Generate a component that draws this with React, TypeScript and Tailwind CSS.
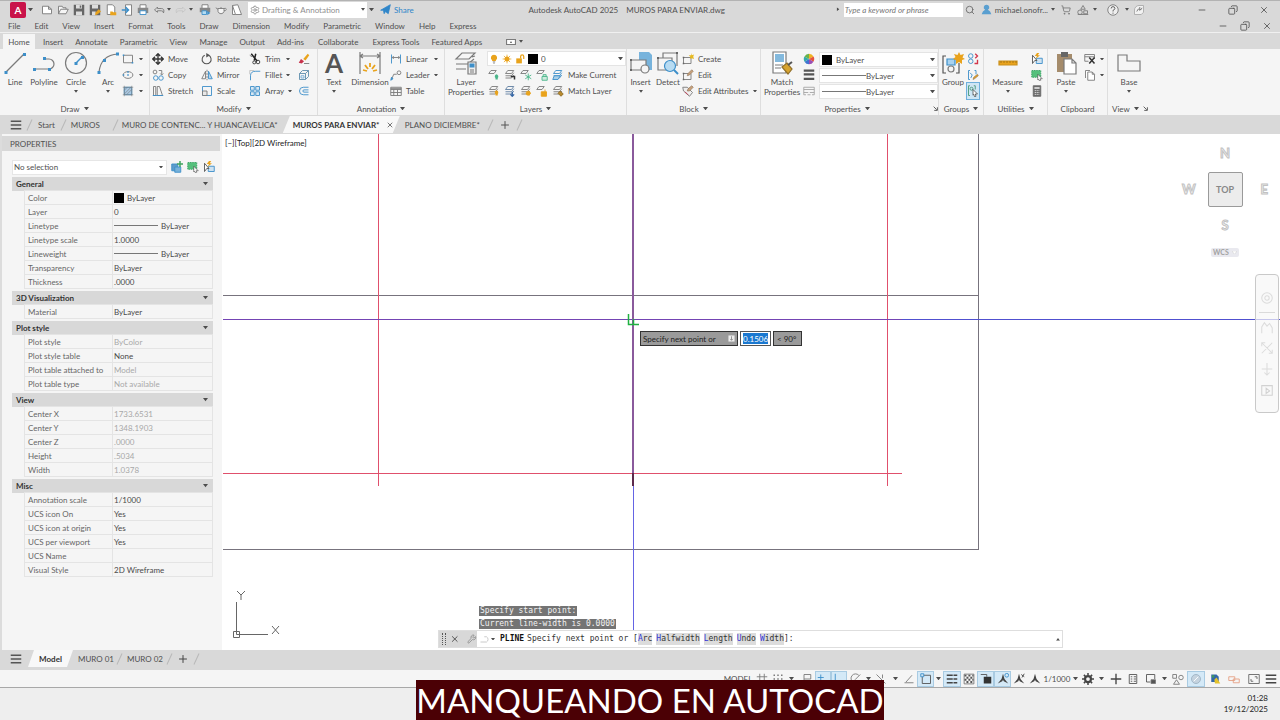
import type { ReactNode } from "react";
import { Search, ShoppingCart, Settings, X, Minus, Copy, Plus, Wrench } from "lucide-react";

type IconProps = { children: ReactNode; className?: string; box?: string };

const Ico = ({ children, className = "size-3", box = "0 0 16 16" }: IconProps) => (
  <svg viewBox={box} fill="none" stroke="#7b7b7b" strokeWidth="1.2" className={`${className} shrink-0`} aria-hidden="true">
    {children}
  </svg>
);

const Caret = ({ className = "w-[5px]" }: { className?: string }) => (
  <svg viewBox="0 0 6 4" className={`${className} shrink-0`} aria-hidden="true">
    <path d="M0 0h6L3 4z" fill="#4d4d4d" />
  </svg>
);

const blue = "#3d8fc9";
const gold = "#e9a31c";
const green = "#4bb58a";

const Sheets = ({ color = "#7b7b7b" }: { color?: string }) => (
  <path d="M5 2h8l-3 4H2zM2 9h8l3-4M2 12h8l3-4" stroke={color} />
);

const icons = {
  fresh: <path d="M2 3h8l4 4v6H2zM10 3v4h4" fill="#fff" />,
  open: <path d="M2 13V3h5l1 2h4v2M2 13l3-6h10l-3 6z" fill="#f5f5f5" />,
  save: <><path d="M1 1h14v14H1z" fill="#666" stroke="none" /><path d="M4 1h8v5H4zM4 10h8v5H4z" fill="#ddd" stroke="none" /><path d="M9 2h2v3H9z" fill="#666" stroke="none" /></>,
  saveAs: <><path d="M1 1h14v14H1z" fill="#666" stroke="none" /><path d="M4 1h8v5H4zM4 10h5v5H4z" fill="#ddd" stroke="none" /><path d="M8 15l1-4 4-4 3 3-5 4z" fill={gold} stroke="none" /></>,
  webOpen: <><path d="M3 1h7l3 3v10H3z" fill="#fff" /><path d="M7 14v-4h3l1 1h4v4H7z" fill={gold} stroke="none" /></>,
  mobile: <><path d="M6 1h8v14H6z" fill="#fff" /><path d="M1 8h8M6 4l4 4-4 4" stroke={blue} strokeWidth="2" /></>,
  plot: <><path d="M4 1h8v5H4z" fill="#fff" /><path d="M1 5h14v7H1z" fill="#888" stroke="none" /><path d="M4 9h8v5H4z" fill="#fff" stroke={blue} /></>,
  batch: <><path d="M4 1h8v5H4z" fill="#fff" /><path d="M1 5h14v6H1z" fill="#888" stroke="none" /><path d="M4 9h6v5H4z" fill="#b4dcf2" stroke={blue} /><path d="M11 9l4 3-4 3z" fill={blue} stroke="none" /></>,
  undo: <path d="M6 4L2 8l4 3V9h5q3 0 3 3 2-6-3-6H6z" />,
  redo: <path d="M10 4l4 4-4 3V9H5q-3 0-3 3-2-6 3-6h5z" stroke="#c6c6c6" />,
  teapot: <path d="M4 6h8v4q-1 3-4 3t-4-3zM4 7L1 5M12 6q3-1 3 1t-3 2M8 4v2" fill="#f5f5f5" />,
  sheet: <path d="M2 2l7-1 5 13H6zM2 2v12h4" fill="#fff" />,
  rect: <><path d="M2 3h12v10H2z" /><path d="M1 2h2v2H1zM13 12h2v2h-2z" fill={blue} stroke="none" /></>,
  ellipse: <><ellipse cx="8" cy="8" rx="6.500" ry="4.500" /><path d="M7 7h2v2H7zM1 7h2v2H1zM7 3h2v2H7z" fill={blue} stroke="none" /></>,
  hatch: <><path d="M3 3h10v10H3z" fill="#a9c9e4" stroke={blue} /><path d="M1 3h14M1 13h14M3 1v14M13 1v14M3 7l4-4M3 12l9-9M6 13l7-7" strokeWidth=".8" /></>,
  move: <path d="M8 1v14M1 8h14M5 4l3-3 3 3M5 12l3 3 3-3M4 5L1 8l3 3M12 5l3 3-3 3" stroke="#333" strokeWidth="1.8" />,
  copy: <><circle cx="4" cy="4" r="2.500" /><circle cx="5" cy="12" r="3" stroke={blue} /><circle cx="12" cy="12" r="3" stroke={blue} /><path d="M9 2h4v5M11 6l2 2 2-2" /></>,
  stretch: <><path d="M2 14V2h3v12zM7 2h3l4 12H7z" /><path d="M1 14h14" stroke={blue} /></>,
  rotate: <><path d="M10 3a6 6 0 1 1-5 0" stroke="#555" strokeWidth="1.4" /><path d="M7 0v6l5-3z" fill="#555" stroke="none" /></>,
  mirror: <><path d="M6 3v10H1z" /><path d="M10 3v10h5z" fill="#b9d4ea" stroke={blue} /><path d="M8 1v14" strokeDasharray="3 1" /></>,
  scale: <><path d="M2 2h12v12H2z" stroke={blue} /><path d="M2 8h6v6H2z" fill="#e8e8e8" /></>,
  trim: <><path d="M3 1l8 10M9 1L7 10" stroke="#222" strokeWidth="2" /><circle cx="12" cy="12" r="2.400" stroke="#333" /><circle cx="7" cy="12.500" r="2" stroke="#333" /><path d="M1 3l3 2" /></>,
  fillet: <><path d="M2 15V9q0-6 7-6h6" stroke={blue} /><path d="M1 7V2h6" stroke="#aaa" strokeWidth=".8" /></>,
  array: <path d="M2 2h5v5H2zM9 2h5v5H9zM2 9h5v5H2zM9 9h5v5H9z" fill="#d7e7f3" stroke={blue} />,
  erase: <><path d="M13 1l2 2-5 7-3-2z" fill={gold} stroke="none" /><path d="M4 8l4 3-3 3-4-1z" fill="#c8324b" stroke="none" /><path d="M8 14h7" /></>,
  explode: <><path d="M2 6h8v8H2zM2 6l4-4h8l-4 4M14 2v8l-4 4" stroke="#5e8dad" /><path d="M4 9h4v3H4z" stroke={blue} strokeWidth=".8" /></>,
  offset: <path d="M14 3H7a5 5 0 0 0 0 10h7M14 6.500H8a1.500 1.500 0 0 0 0 3h6" stroke={blue} />,
  linear: <><path d="M2 2v12M14 2v12" stroke={blue} /><path d="M3 6h10M5 4L3 6l2 2M11 4l2 2-2 2" /></>,
  leader: <><path d="M2 14l3-7h4" /><circle cx="12" cy="5" r="2.500" /><path d="M1 15l1-4 2 2z" fill={blue} stroke={blue} /></>,
  table: <path d="M1 3h14v11H1zM1 6h14M1 10h14M5 6v8M10 6v8M1 4.500h14" />,
  palette: <><path d="M8 8V1a7 7 0 0 1 6 3.500z" fill="#f0b323" stroke="none" /><path d="M8 8l6-3.500a7 7 0 0 1 0 7z" fill="#e5533d" stroke="none" /><path d="M8 8l6 3.500A7 7 0 0 1 8 15z" fill="#9b4fb3" stroke="none" /><path d="M8 8v7a7 7 0 0 1-6-3.500z" fill="#3f74d1" stroke="none" /><path d="M8 8l-6 3.500a7 7 0 0 1 0-7z" fill="#36a9a9" stroke="none" /><path d="M8 8L2 4.500A7 7 0 0 1 8 1z" fill="#69b34b" stroke="none" /></>,
  weights: <path d="M1 2h14M1 7h14M1 13h14" stroke="#555" strokeWidth="3" />,
  types: <path d="M1 3h14M1 6h14M1 10h6M9 10h6M1 13h3M6 13h4M12 13h3M1 3v10M15 3v10" stroke="#a5a5a5" />,
  create: <><path d="M2 6h10v8H2z" /><path d="M1 5h2v2H1zM1 13h2v2H1z" fill="#666" stroke="none" /><path d="M12 0l1 3 3-1-1 3 1 3-3-1-2 1V5L9 3l3 0z" fill="#e6b91f" stroke="none" /></>,
  edit: <><path d="M2 6h10v8H2z" /><path d="M1 5h2v2H1zM1 13h2v2H1z" fill="#666" stroke="none" /><path d="M7 9l1-3 5-5 2 2-5 5z" fill="#c9a27b" stroke="#8a6f55" strokeWidth=".8" /></>,
  attrs: <><path d="M1 3h6l7 7-4 5-8-7z" fill="#eee" /><path d="M7 8l1-3 5-4 2 2-5 5z" fill="#c9a27b" stroke="#8a6f55" strokeWidth=".8" /><path d="M4 9l4 4" stroke="#c8324b" /></>,
  ungroup: <><circle cx="5" cy="4" r="3" stroke={blue} /><circle cx="5" cy="11" r="3" stroke={blue} /><path d="M11 1l3 3-3 3M10 14h4V9" stroke="#d2354a" strokeWidth="1.8" /></>,
  groupEdit: <><path d="M4 2H2v12h2M10 2h2v5" stroke={blue} /><path d="M4 5l3 3-2 4" stroke={blue} /><path d="M8 14l1-3 5-4 1 2-5 4z" fill={gold} stroke="#8a6f55" strokeWidth=".8" /></>,
  groupPick: <><path d="M4 1H2v13h2M9 1h2v5" stroke="#4a9a7a" /><circle cx="6" cy="5" r="2" stroke="#4a9a7a" /><path d="M8 6l6 6h-3l1 3-2 .5-1-3-1 1z" fill="#fff" stroke="#333" strokeWidth=".9" /></>,
  quickSel: <><path d="M7 7h8v7H7z" fill="#cfe2f0" stroke={blue} /><path d="M2 3l6 7H5l-3 4z" fill="#fff" stroke="#555" /><path d="M8 0L5 4h3L6 8l6-5H9l2-3z" fill={gold} stroke="none" /></>,
  pick: <><path d="M1 2h12v9H1z" fill="#55c07c" stroke="#38a062" strokeDasharray="2 1" /><path d="M9 7l6 6h-3l1 2-2 .5-1-2-1 1z" fill="#fff" stroke="#444" strokeWidth=".8" /></>,
  calc: <><path d="M3 1h10v14H3z" fill="#6a6a6a" stroke="#6a6a6a" /><path d="M4.500 3h7v2h-7z" fill="#eee" stroke="none" /><path d="M5 7.500h6M5 10h6M5 12.500h6" stroke="#eee" strokeDasharray="1.500 1" /></>,
  cut: <><path d="M1 2h13v6M1 2v9h5M1 5h13" /><path d="M7 6l7 8M14 6l-7 8" stroke="#333" strokeWidth="2" /></>,
  copyClip: <path d="M2 12V2h6M5 4h6l3 3v8H5zM11 4v3h3" fill="#fff" />,
  addSel: <><path d="M1 4h8v9H1z" fill="#5e9ccb" stroke={blue} /><path d="M5 8h8v7H5z" fill="#78b2da" stroke={blue} /><path d="M12 0v8M8 4h8" stroke="#3fa45f" strokeWidth="2" /></>,
  user: <path d="M8 1a4 4 0 0 1 2 7.500Q14 10 15 15H1q1-5 5-6.500A4 4 0 0 1 8 1z" fill="#5a9fd0" stroke="none" />,
  apps: <><path d="M8 2l3 5H5z" /><circle cx="4" cy="11" r="3" /><path d="M9 9h5v4H9zM1 14h14" /></>,
  help: <><circle cx="8" cy="8" r="7" fill="#eee" /><path d="M5.500 6q0-2.500 2.500-2.500T10.500 6Q10.500 7.500 8 8.500V10M8 11.500v1.500" stroke="#555" /></>,
  assist: <><path d="M2 14V8a6 6 0 0 1 6-6h6v9l-3 3z" fill="#f2f2f2" stroke="#aaa" /><path d="M5 10q2-5 4-3t3-2M9 4v5" stroke="#777" /></>,
  plane: <path d="M1 9l14-8-3 13-4-3-2 3-1-5z" fill="#2f86c9" stroke="#2f86c9" />,
  bulb: <><path d="M8 1a5 5 0 0 1 3 9v1H5v-1a5 5 0 0 1 3-9z" fill={gold} stroke="none" /><path d="M6 12.500h4M6.500 14.500h3" stroke="#777" /></>,
  sun: <><circle cx="8" cy="8" r="4" fill={gold} stroke="none" /><path d="M8 1v14M1 8h14M3 3l10 10M13 3L3 13" stroke={gold} /></>,
  lock: <><path d="M2 7h9v8H2z" fill={gold} stroke="none" /><path d="M9 7V4a2.500 2.500 0 0 1 5 0v4" stroke={gold} strokeWidth="2" /></>,
};

const layerOff = <><path d="M4 2h7l-3 4H1z" /><path d="M11 7a3 3 0 0 1 2 5v2h-3v-2a3 3 0 0 1 1-5z" fill={green} stroke="none" /></>;
const layerIso = <><Sheets /><path d="M9 10h5v4" stroke="#333" strokeWidth="2" /></>;
const layerFreeze = <><path d="M4 2h7l-3 4H1z" /><path d="M11 6v9M7 8l8 5M15 8l-8 5" stroke={green} /></>;
const layerLock = <><path d="M4 2h7l-3 4H1z" /><path d="M8 10h7v5H8zM9.500 10V7.500h4V10" stroke={green} fill="#cdeadd" /></>;
const layerCurrent = <><Sheets color={blue} /><path d="M3 9h8l-3 5H1z" fill="#a9cfe8" stroke={blue} /></>;
const layerOn = <><Sheets /><path d="M11 7a3 3 0 0 1 2 5v2h-3v-2a3 3 0 0 1 1-5z" fill={gold} stroke="none" /></>;
const layerUniso = <><Sheets color="#5f7ea0" /><path d="M11 9v6M8.500 12.500L11 15l2.500-2.500" stroke="#3465a4" strokeWidth="1.800" /></>;
const layerThaw = <><Sheets /><circle cx="11" cy="11" r="3" fill={gold} stroke={gold} strokeDasharray="1 1" /></>;
const layerUnlock = <><path d="M4 2h7l-3 4H1z" /><path d="M7 9h7v6H7zM12 9V6" fill={gold} stroke={gold} /></>;
const layerMatch = <><Sheets /><path d="M8 11l3-3 4 4-3 3z" fill="#b88a2c" stroke="#8d6a22" /></>;

const big = {
  line: <Ico box="0 0 24 24" className="size-6"><path d="M3 21L21 3" /><path d="M1.500 20h3v3h-3zM20 2h3v3h-3z" fill={blue} stroke="none" /></Ico>,
  polyline: <Ico box="0 0 24 24" className="size-6"><path d="M3 18h14a5 5 0 0 0 0-10h-5" /><path d="M1 17h3v3H1zM16 17h3v3h-3zM11 6h3v3h-3z" fill={blue} stroke="none" /></Ico>,
  circle: <Ico box="0 0 24 24" className="size-6"><circle cx="12" cy="12" r="10.500" /><path d="M12 12l6-6" stroke={blue} strokeWidth="1.500" /><path d="M10.500 11h3v3h-3zM17 5h3v3h-3z" fill={blue} stroke="none" /></Ico>,
  arc: <Ico box="0 0 24 24" className="size-6"><path d="M3 21Q5 4 22 3" /><path d="M1.500 20h3v3h-3zM7 8h3v3H7zM20 1.500h3v3h-3z" fill={blue} stroke="none" /></Ico>,
  dimension: <Ico box="0 0 24 24" className="size-6"><path d="M2 1v22M22 1v22M2 5h20M5 3L2 5l3 2M19 3l3 2-3 2" /><path d="M12 12v4M7 14l3 4M17 14l-3 4M5 19l4 1M19 19l-4 1" stroke={gold} strokeWidth="1.800" /></Ico>,
  layer: <Ico box="0 0 24 24" className="size-6"><path d="M8 2h13l-6 6H2zM2 13h12l6-5M2 18h10M18 6l3-1" /><path d="M14 11h8v12h-8z" fill="#eee" /><path d="M15.500 12.500h5v4h-5z" fill={blue} stroke="none" /><path d="M16 19h4M16 21h4" /></Ico>,
  insert: <Ico box="0 0 24 24" className="size-6"><path d="M10 1h10l3 3v15H10z" fill="#77b3dc" stroke="none" /><path d="M2 9h15v10H2z" fill="#f5f5f5" /><circle cx="16" cy="18" r="4" fill="#f5f5f5" /><path d="M1 8h2v2H1zM1 18h2v2H1z" fill="#666" stroke="none" /></Ico>,
  detect: <Ico box="0 0 24 24" className="size-6"><path d="M2 7h14v12H2zM7 7V2h14v13" /><circle cx="14" cy="15" r="5.500" fill="#b7dbf2" stroke={blue} /><path d="M18 19l4 4" stroke={blue} strokeWidth="2" /><path d="M1 6h2v2H1zM20 1h2v2h-2z" fill="#666" stroke="none" /></Ico>,
  match: <Ico box="0 0 24 24" className="size-6"><path d="M3 1h13v21H3z" fill="#fff" /><path d="M5 3h9v8H5z" fill="#83b9dd" stroke="none" /><path d="M5 14h8M5 17h6" /><path d="M12 16l5-4 5 6-4 5z" fill="#d7a32e" stroke="#92702a" /><path d="M18 14l4-3" stroke="#555" strokeWidth="2" /></Ico>,
  group: <Ico box="0 0 24 24" className="size-6"><path d="M5 5H2v17h3M15 22h3V12" stroke="#555" /><path d="M6 8h8v6H6z" fill="#a9d2ef" stroke={blue} /><circle cx="10" cy="18" r="3" /><path d="M18 1l1.500 3L23 3l-1.500 3.500L24 8l-3 1v4l-3-2-3 2v-4l-3-1 2.500-2L13 3l3.500 1z" fill={gold} stroke="none" /></Ico>,
  measure: <Ico box="0 0 24 24" className="size-6"><path d="M3 10h18v4H3z" fill={gold} stroke="#c98f1c" /><path d="M5 10v2M8 10v2M11 10v2M14 10v2M17 10v2M20 10v2" stroke="#a87614" strokeWidth="1" /></Ico>,
  paste: <Ico box="0 0 24 24" className="size-6"><path d="M3 3h15v18H3z" fill="#a58c6c" stroke="none" /><path d="M7 1h7v5H7z" fill="#666" stroke="none" /><path d="M10 8h8l4 4v11H10zM18 8v4h4" fill="#fff" /></Ico>,
  base: <Ico box="0 0 24 24" className="size-6"><path d="M1 4h9v6h13v10H1z" /></Ico>,
};

const Big = ({ icon, label, width, caret }: { icon: ReactNode; label: string; width: string; caret?: boolean }) => (
  <button className={`flex ${width} shrink-0 flex-col items-center`}>
    {icon}
    <span className="mt-[2px] text-center leading-[10px] whitespace-pre-line">{label}</span>
    {caret && <Caret className="mt-[3px] w-1" />}
  </button>
);

const Small = ({ icon, label, caret, on }: { icon: ReactNode; label?: string; caret?: boolean; on?: boolean }) => (
  <button className={`flex h-4 items-center gap-1 whitespace-nowrap ${caret ? "w-full" : ""} ${on ? "bg-[#cfe6f5] outline outline-[#6fb0dc]" : ""}`}>
    <Ico>{icon}</Ico>
    {label}
    {caret && <Caret className="ml-auto w-1" />}
  </button>
);

const Col = ({ width, children }: { width: string; children: ReactNode }) => (
  <div className={`flex ${width} shrink-0 flex-col items-start`}>{children}</div>
);

const Launcher = () => (
  <Ico className="size-[5px]" box="0 0 8 8"><path d="M1 1l5 5M7 2v5H2" stroke="#555" strokeWidth="1.500" /></Ico>
);

type PanelProps = { title: string; width: string; caret?: boolean; launcher?: boolean; children: ReactNode };

const Panel = ({ title, width, caret = true, launcher, children }: PanelProps) => (
  <section className={`flex ${width} shrink-0 flex-col border-r border-[#dedede] pt-[2px]`}>
    <div className="flex h-[51px] items-start">{children}</div>
    <div className="flex h-[13px] items-center">
      <h2 className="flex flex-1 items-center justify-center gap-1">
        {title}
        {caret && <Caret />}
      </h2>
      {launcher && <Launcher />}
    </div>
  </section>
);

const ByLayerSelect = ({ name, line }: { name: string; line?: boolean }) => (
  <div className="flex h-[15px] w-full items-center border border-[#e4e4e4] bg-white pr-[2px] pl-[2px]">
    {line ? <span className="h-px w-11 bg-[#777]" /> : <span className="mr-1 size-[10px] bg-black" />}
    <select aria-label={name} className="min-w-0 flex-1 appearance-none bg-transparent outline-none">
      <option>ByLayer</option>
    </select>
    <Caret />
  </div>
);

const Slash = () => <span className="h-3 w-px shrink-0 rotate-[25deg] bg-[#b8b8b8]" />;

const Burger = () => (
  <Ico className="size-3"><path d="M1 3h14M1 8h14M1 13h14" stroke="#555" strokeWidth="1.800" /></Ico>
);

const quickAccess = [icons.fresh, icons.open, icons.save, icons.saveAs, icons.webOpen, icons.mobile, icons.plot];

const TitleBar = () => (
  <header className="flex h-[18px] items-center border-t border-[#b3b3b3] pl-[10px]">
    <button className="grid size-4 place-items-center rounded-xs bg-[#c9134a] text-[10px] font-bold text-white" aria-label="Application menu">A</button>
    <Caret className="mr-2 ml-[2px] w-[5px]" />
    <div className="flex gap-1">
      {quickAccess.map((icon, i) => (
        <button key={i} aria-label="Quick access"><Ico>{icon}</Ico></button>
      ))}
      <button className="flex items-center gap-[2px]" aria-label="Undo"><Ico>{icons.undo}</Ico><Caret className="w-1" /></button>
      <button className="flex items-center gap-[2px]" aria-label="Redo"><Ico>{icons.redo}</Ico><Caret className="w-1" /></button>
      <button className="ml-[2px]" aria-label="Batch plot"><Ico>{icons.batch}</Ico></button>
      <button aria-label="Render"><Ico>{icons.teapot}</Ico></button>
      <button aria-label="Sheet set"><Ico>{icons.sheet}</Ico></button>
    </div>
    <div className="ml-[5px] flex h-4 w-[119px] items-center gap-[2px] bg-white px-[2px]">
      <Settings className="size-[10px]" color="#8a8a8a" />
      <select aria-label="Workspace" className="min-w-0 flex-1 appearance-none bg-transparent text-[#8f8f8f] outline-none">
        <option>Drafting &amp; Annotation</option>
      </select>
      <Caret className="w-1" />
    </div>
    <Caret className="mr-[6px] ml-[2px] w-[5px]" />
    <button className="flex items-center gap-[3px] text-[#2f86c9]"><Ico className="size-[11px]">{icons.plane}</Ico>Share</button>
    <h1 className="flex flex-1 justify-center gap-2 pl-1 whitespace-nowrap">
      <span>Autodesk AutoCAD 2025</span>
      <span>MUROS PARA ENVIAR.dwg</span>
    </h1>
    <span className="mr-1 rotate-[-90deg]"><Caret className="w-1" /></span>
    <input type="text" aria-label="Search" placeholder="Type a keyword or phrase" className="h-[14px] w-[119px] bg-white px-px italic outline-none placeholder:text-[#777]" />
    <Search className="mr-[6px] ml-[2px] size-[10px]" color="#666" />
    <button className="flex items-center gap-[3px]"><Ico className="size-[11px]">{icons.user}</Ico>michael.onofr...<Caret className="w-1" /></button>
    <ShoppingCart className="ml-[6px] size-[10px]" color="#777" />
    <button className="ml-[6px] flex items-center gap-1" aria-label="Apps"><Ico>{icons.apps}</Ico><Caret className="w-1" /></button>
    <button className="ml-[10px] flex items-center gap-[6px]" aria-label="Help"><Ico>{icons.help}</Ico><Caret className="w-1" /></button>
    <Ico className="ml-1 size-3">{icons.assist}</Ico>
    <div className="mr-[11px] ml-[52px] flex gap-[21px]">
      <button aria-label="Minimize"><Minus className="size-[10px]" /></button>
      <button aria-label="Restore"><Copy className="size-[10px] -scale-x-100" /></button>
      <button aria-label="Close"><X className="size-[10px]" /></button>
    </div>
  </header>
);

const menus = ["File", "Edit", "View", "Insert", "Format", "Tools", "Draw", "Dimension", "Modify", "Parametric", "Window", "Help", "Express"];
const ribbonTabs = ["Insert", "Annotate", "Parametric", "View", "Manage", "Output", "Add-ins", "Collaborate", "Express Tools", "Featured Apps"];

const Ribbon = () => (
  <div className="flex h-[66px] overflow-hidden bg-[#f5f5f5]">
    <Panel title="Draw" width="w-[150px]">
      <Big icon={big.line} label="Line" width="w-[30px]" />
      <Big icon={big.polyline} label="Polyline" width="w-[28px]" />
      <Big icon={big.circle} label="Circle" width="w-[36px]" caret />
      <Big icon={big.arc} label="Arc" width="w-[28px]" caret />
      <Col width="w-[21px]">
        <Small icon={icons.rect} caret />
        <Small icon={icons.ellipse} caret />
        <Small icon={icons.hatch} caret />
      </Col>
    </Panel>
    <Panel title="Modify" width="w-[168px]">
      <div className="flex pl-[2px]">
        <Col width="w-[49px]">
          <Small icon={icons.move} label="Move" />
          <Small icon={icons.copy} label="Copy" />
          <Small icon={icons.stretch} label="Stretch" />
        </Col>
        <Col width="w-[48px]">
          <Small icon={icons.rotate} label="Rotate" />
          <Small icon={icons.mirror} label="Mirror" />
          <Small icon={icons.scale} label="Scale" />
        </Col>
        <Col width="w-[49px] pr-2">
          <Small icon={icons.trim} label="Trim" caret />
          <Small icon={icons.fillet} label="Fillet" caret />
          <Small icon={icons.array} label="Array" caret />
        </Col>
        <Col width="w-4">
          <Small icon={icons.erase} />
          <Small icon={icons.explode} />
          <Small icon={icons.offset} />
        </Col>
      </div>
    </Panel>
    <Panel title="Annotation" width="w-[127px]">
      <Big icon={<span className="h-6 text-[26px] leading-6 font-bold text-[#555]">A</span>} label="Text" width="w-[32px]" caret />
      <Big icon={big.dimension} label="Dimension" width="w-[40px]" />
      <Col width="w-12">
        <Small icon={icons.linear} label="Linear" caret />
        <Small icon={icons.leader} label="Leader" caret />
        <Small icon={icons.table} label="Table" />
      </Col>
    </Panel>
    <Panel title="Layers" width="w-[182px]">
      <Big icon={big.layer} label={"Layer\nProperties"} width="w-[42px]" />
      <div className="flex-1">
        <div className="flex h-[15px] items-center gap-[3px] border border-[#e4e4e4] bg-white pr-[2px] pl-px">
          <Ico className="size-[10px]">{icons.bulb}</Ico>
          <Ico className="size-[10px]">{icons.sun}</Ico>
          <Ico className="size-[10px]">{icons.lock}</Ico>
          <span className="size-[10px] bg-black" />
          <select aria-label="Layer" className="min-w-0 flex-1 appearance-none bg-transparent outline-none">
            <option>0</option>
          </select>
          <Caret />
        </div>
        <div className="flex gap-1 pt-px pl-px">
          <Small icon={layerOff} /><Small icon={layerIso} /><Small icon={layerFreeze} /><Small icon={layerLock} />
          <Small icon={layerCurrent} label="Make Current" />
        </div>
        <div className="flex gap-1 pl-px">
          <Small icon={layerOn} /><Small icon={layerUniso} /><Small icon={layerThaw} /><Small icon={layerUnlock} />
          <Small icon={layerMatch} label="Match Layer" />
        </div>
      </div>
    </Panel>
    <Panel title="Block" width="w-[134px]">
      <Big icon={big.insert} label="Insert" width="w-[27px]" caret />
      <Big icon={big.detect} label="Detect" width="w-[28px]" />
      <Col width="w-[75px]">
        <Small icon={icons.create} label="Create" />
        <Small icon={icons.edit} label="Edit" />
        <Small icon={icons.attrs} label="Edit Attributes" caret />
      </Col>
    </Panel>
    <Panel title="Properties" width="w-[178px]" launcher>
      <Big icon={big.match} label={"Match\nProperties"} width="w-[42px]" />
      <Col width="w-[16px]">
        <Small icon={icons.palette} />
        <Small icon={icons.weights} />
        <Small icon={icons.types} />
      </Col>
      <div className="flex flex-1 flex-col gap-px pt-px">
        <ByLayerSelect name="Object color" />
        <ByLayerSelect name="Lineweight" line />
        <ByLayerSelect name="Linetype" line />
      </div>
    </Panel>
    <Panel title="Groups" width="w-[45px]">
      <Big icon={big.group} label="Group" width="w-[28px]" />
      <Col width="w-[14px]">
        <Small icon={icons.ungroup} />
        <Small icon={icons.groupEdit} />
        <Small icon={icons.groupPick} on />
      </Col>
    </Panel>
    <Panel title="Utilities" width="w-[64px]">
      <Big icon={big.measure} label="Measure" width="w-[47px]" caret />
      <Col width="w-3">
        <Small icon={icons.quickSel} />
        <Small icon={icons.pick} />
        <Small icon={icons.calc} />
      </Col>
    </Panel>
    <Panel title="Clipboard" width="w-[60px]" caret={false}>
      <Big icon={big.paste} label="Paste" width="w-9" caret />
      <Col width="w-[19px]">
        <Small icon={icons.cut} caret />
        <Small icon={icons.copyClip} caret />
      </Col>
    </Panel>
    <section className="flex w-[42px] shrink-0 flex-col pt-[2px]">
      <div className="h-[51px]"><Big icon={big.base} label="Base" width="w-[42px]" caret /></div>
      <h2 className="flex h-[13px] items-center gap-1 pl-1">View<Caret /><Launcher /></h2>
    </section>
  </div>
);

const DocTabs = () => (
  <nav className="flex h-[19px] items-center pl-[10px]">
    <Burger />
    <div className="ml-[7px] flex items-center">
      <Slash /><a href="#" className="mx-2">Start</a>
      <Slash /><a href="#" className="ml-[7px] w-11">MUROS</a>
      <Slash /><a href="#" className="ml-[6px] w-[161px] whitespace-nowrap">MURO DE CONTENC... Y HUANCAVELICA*</a>
    </div>
    <a href="#" className="flex h-[17px] w-[117px] items-center justify-between bg-[#f8f8f8] pr-[6px] pl-[10px] font-bold whitespace-nowrap text-[#333] [clip-path:polygon(7px_0,100%_0,calc(100%-7px)_100%,0_100%)]">
      MUROS PARA ENVIAR*
      <X className="size-2" />
    </a>
    <a href="#" className="mr-[13px] ml-[5px] w-[72px] whitespace-nowrap">PLANO DICIEMBRE*</a>
    <Slash />
    <button className="mx-[8px]" aria-label="New drawing"><Plus className="size-3" color="#555" /></button>
    <Slash />
  </nav>
);

type Row = { label: string; value: string; kind?: "swatch" | "line" | "muted" };

const sections: { title: string; rows: Row[] }[] = [
  {
    title: "General",
    rows: [
      { label: "Color", value: "ByLayer", kind: "swatch" },
      { label: "Layer", value: "0" },
      { label: "Linetype", value: "ByLayer", kind: "line" },
      { label: "Linetype scale", value: "1.0000" },
      { label: "Lineweight", value: "ByLayer", kind: "line" },
      { label: "Transparency", value: "ByLayer" },
      { label: "Thickness", value: ".0000" },
    ],
  },
  { title: "3D Visualization", rows: [{ label: "Material", value: "ByLayer" }] },
  {
    title: "Plot style",
    rows: [
      { label: "Plot style", value: "ByColor", kind: "muted" },
      { label: "Plot style table", value: "None" },
      { label: "Plot table attached to", value: "Model", kind: "muted" },
      { label: "Plot table type", value: "Not available", kind: "muted" },
    ],
  },
  {
    title: "View",
    rows: [
      { label: "Center X", value: "1733.6531", kind: "muted" },
      { label: "Center Y", value: "1348.1903", kind: "muted" },
      { label: "Center Z", value: ".0000", kind: "muted" },
      { label: "Height", value: ".5034", kind: "muted" },
      { label: "Width", value: "1.0378", kind: "muted" },
    ],
  },
  {
    title: "Misc",
    rows: [
      { label: "Annotation scale", value: "1/1000" },
      { label: "UCS icon On", value: "Yes" },
      { label: "UCS icon at origin", value: "Yes" },
      { label: "UCS per viewport", value: "Yes" },
      { label: "UCS Name", value: "" },
      { label: "Visual Style", value: "2D Wireframe" },
    ],
  },
];

const PropertiesPalette = () => (
  <aside className="w-[222px] shrink-0 border-l-2 border-[#dcdcdc] bg-[#f5f5f5] pt-[2px]">
    <h2 className="flex h-[15px] w-[218px] items-center bg-[#d8d8d8] pl-2">PROPERTIES</h2>
    <div className="mt-2 ml-[10px] flex h-4 items-center">
      <div className="mr-1 flex h-[15px] w-[155px] items-center border border-[#e6e6e6] bg-white px-px">
        <select aria-label="Selection" className="min-w-0 flex-1 appearance-none bg-transparent outline-none">
          <option>No selection</option>
        </select>
        <Caret className="mr-[2px] w-1" />
      </div>
      <div className="flex gap-1">
        <button aria-label="Toggle pickadd"><Ico>{icons.addSel}</Ico></button>
        <button aria-label="Select objects"><Ico>{icons.pick}</Ico></button>
        <button aria-label="Quick select"><Ico>{icons.quickSel}</Ico></button>
      </div>
    </div>
    <div className="mt-[2px] ml-[10px] flex w-[201px] flex-col gap-[2px]">
      {sections.map((section) => (
        <section key={section.title}>
          <button className="flex h-[14px] w-full items-center justify-between bg-[#d8d8d8] pr-[5px] pl-1 font-bold text-[#333]">
            {section.title}
            <Caret />
          </button>
          <table className="-mt-px ml-3 w-[189px] table-fixed border-collapse">
            <tbody>
              {section.rows.map((row) => (
                <tr key={row.label} className="h-[14px]">
                  <th className="h-[14px] w-[88px] border border-[#e4e4e4] p-0 pl-[3px] text-left font-normal whitespace-nowrap text-[#666]">{row.label}</th>
                  <td className={`h-[14px] border border-[#e4e4e4] p-0 pl-px ${row.kind === "muted" ? "text-[#a8a8a8]" : "text-[#4a4a4a]"}`}>
                    <div className="flex h-[13px] items-center gap-[3px]">
                      {row.kind === "swatch" && <span className="size-[10px] bg-black" />}
                      {row.kind === "line" && <span className="h-px w-11 bg-[#777]" />}
                      {row.value}
                    </div>
                  </td>
                </tr>
              ))}
            </tbody>
          </table>
        </section>
      ))}
    </div>
  </aside>
);

const Drawing = () => (
  <svg className="absolute inset-0 h-full w-full" fill="none" strokeWidth="1" aria-hidden="true">
    <path d="M1 161.500H757M756.500 0V415.500M1 415.500H757" stroke="#77737d" />
    <path d="M156.500 0V352M665.500 0V352M1 339.500H680" stroke="#e0506c" />
    <path d="M1 185.500H680" stroke="#7444b4" />
    <path d="M680 185.500H2000" stroke="#5050d0" />
    <path d="M411 0V339" stroke="#8a5a9c" strokeWidth="2" />
    <path d="M411 339V352" stroke="#5c2a4c" strokeWidth="2" />
    <path d="M411.500 352V496" stroke="#6464e4" />
    <path d="M406.500 180V190.500H417M411.500 185V190" stroke="#1fb141" strokeWidth="1.500" />
    <path d="M14.500 468V500.500H46M11.500 497.500h6v6h-6z" stroke="#666" />
    <path d="M15 457l4 4 4-4M19 461v5M50 492l7 8M57 492l-7 8" stroke="#666" />
  </svg>
);

const Compass = () => (
  <div className="absolute top-[13px] right-3 grid w-[86px] grid-cols-3 place-items-center text-[13px] leading-[13px] font-bold text-[#f4f4f4] [-webkit-text-stroke:1px_#c2c2c2]">
    <span className="col-start-2">N</span>
    <span className="col-start-1 justify-self-start">W</span>
    <button className="my-3 size-[35px] rounded-xs border border-[#9a9a9a] bg-[#ececec] text-[9px] text-[#888] [-webkit-text-stroke:0]">TOP</button>
    <span className="justify-self-end">E</span>
    <span className="col-start-2">S</span>
    <span className="col-start-2 mt-4 flex h-[9px] w-7 items-center justify-center gap-[3px] rounded-xs bg-[#e9e9ef] text-[7px] text-[#a2a2a2] [-webkit-text-stroke:0]">
      WCS
      <svg viewBox="0 0 6 4" className="w-[5px]"><path d="M0 0h6L3 4z" fill="#fff" stroke="#c4c4c4" strokeWidth=".5" /></svg>
    </span>
  </div>
);

const NavBar = () => (
  <div className="absolute top-[140px] right-px flex h-[139px] w-6 flex-col items-center justify-around rounded-sm border border-[#c9c9c9] bg-[#f6f6f6]/70 py-3">
    <Ico className="size-[14px]"><circle cx="8" cy="8" r="6" stroke="#dcdcdc" /><circle cx="8" cy="8" r="2.500" stroke="#dcdcdc" /></Ico>
    <span className="h-px w-4 bg-[#dadada]" />
    <Ico className="size-[14px]"><path d="M2 15V8l3-5 3 4 3-3 3 5v6" stroke="#dcdcdc" /></Ico>
    <Ico className="size-[14px]"><path d="M2 2l12 12M14 2L2 14M2 6V2h4M10 14h4v-4" stroke="#dcdcdc" /></Ico>
    <Ico className="size-[14px]"><path d="M8 1v14M2 8h12M5 12l3 3 3-3" stroke="#dcdcdc" /></Ico>
    <Ico className="size-[14px]"><path d="M2 3h12v11H2zM7 6l4 3-4 3z" stroke="#d2d2d2" /></Ico>
  </div>
);

const DynamicInput = () => (
  <div className="absolute top-[197px] left-[418px] flex h-[15px] items-center gap-[2px] text-[#222]">
    <label htmlFor="distance" className="flex h-full w-[98px] items-center justify-between border border-[#333] bg-[#9a9a9a] px-[2px] whitespace-nowrap">
      Specify next point or
      <Ico className="size-[7px]"><path d="M1 1h14v14H1z" fill="#eee" stroke="none" /><path d="M8 3v9M5 9l3 3 3-3" stroke="#888" strokeWidth="2" /></Ico>
    </label>
    <div className="flex h-full w-[31px] items-center border border-[#555] bg-white px-[2px]">
      <input id="distance" defaultValue="0.1506" className="h-[11px] w-[25px] bg-[#1a78d0] text-white outline-none" />
    </div>
    <span className="flex h-full w-[29px] items-center border border-[#333] bg-[#9a9a9a] pl-[3px] whitespace-nowrap">&lt; 90°</span>
  </div>
);

const options = ["Arc", "Halfwidth", "Length", "Undo", "Width"];

const CommandLine = () => (
  <div className="absolute bottom-[2px] left-[216px] w-[625px] font-['DejaVu_Sans_Mono',monospace] text-[8px]">
    <div className="mb-px ml-[41px] flex flex-col items-start gap-[3px] text-[#f2f2f2]">
      <span className="bg-[#747474] px-px leading-[10px]">Specify start point:</span>
      <span className="bg-[#747474] px-px leading-[10px]">Current line-width is 0.0000</span>
    </div>
    <div className="flex h-[18px] items-center border border-[#dedede] bg-white text-[#333]">
      <div className="flex h-full w-[38px] items-center gap-2 bg-[#d8d8d8] pl-[3px]">
        <span className="h-3 w-1 border-x border-dotted border-[#555]" />
        <X className="-ml-1 size-[10px]" />
        <Wrench className="size-[10px]" color="#888" />
      </div>
      <Ico className="ml-[2px] size-3"><path d="M2 12h8a4 4 0 0 0 0-7H7" stroke="#c4c4c4" /></Ico>
      <Caret className="mr-[5px] w-1" />
      <b className="mr-[3px] text-[#111]">PLINE</b>
      <span className="whitespace-nowrap">Specify next point or [</span>
      {options.map((option, i) => (
        <button key={option} className={i ? "ml-1 bg-[#dcdcdc]" : "bg-[#dcdcdc]"}>
          <span className="text-[#3636d6]">{option[0]}</span>
          {option.slice(1)}
        </button>
      ))}
      <span>]:</span>
      <input aria-label="Command" className="min-w-0 flex-1 outline-none" />
      <Caret className="mr-[2px] w-1 rotate-180" />
    </div>
  </div>
);

const LayoutTabs = () => (
  <nav className="flex h-5 items-start pl-[10px]">
    <span className="mt-[3px]"><Burger /></span>
    <div className="flex h-[17px] items-center">
      <a href="#" className="ml-[6px] flex h-full w-[45px] items-center justify-center bg-[#f8f8f8] font-bold text-[#333] [clip-path:polygon(6px_0,100%_0,calc(100%-6px)_100%,0_100%)]">Model</a>
      <a href="#" className="mr-[5px] ml-[5px]">MURO 01</a>
      <Slash />
      <a href="#" className="mr-[6px] ml-[7px]">MURO 02</a>
      <Slash />
      <button className="mx-[7px]" aria-label="New layout"><Plus className="size-3" color="#444" /></button>
      <Slash />
    </div>
  </nav>
);

const person = <path d="M8 1l2 7 5 6-6-3-1-2-1 2-6 3 5-6z" fill="#444" stroke="none" />;

const checker = (
  <>
    <path d="M1.500 1.500h13v13h-13z" stroke="#777" />
    <path d="M2 3.500h12M2 9h12" stroke="#555" strokeWidth="2.600" strokeDasharray="2.600 2.600" />
    <path d="M4.600 6.300h10M4.600 12h10" stroke="#555" strokeWidth="2.600" strokeDasharray="2.600 2.600" />
  </>
);

const statusItems: { width: string; icon?: ReactNode; on?: boolean; text?: string; caret?: boolean }[] = [
  { width: "w-[30px]", text: "MODEL" },
  { width: "w-[17px]", icon: <path d="M5 1v14M11 1v14M1 5h14M1 11h14" /> },
  { width: "w-[15px]", icon: <path d="M2 3h12M2 8h12M2 13h12" strokeDasharray="2 3" strokeWidth="2" /> },
  { width: "w-[13px]", caret: true },
  { width: "w-[17px]", icon: <path d="M4 15V2h9v6H4" /> },
  { width: "w-4", icon: <path d="M2 14h12M5 2v9M1 6h8" stroke={blue} />, on: true },
  { width: "w-4", icon: <path d="M3 1v13h12" stroke={blue} />, on: true },
  { width: "w-4", icon: <path d="M13 3a6 6 0 1 0 1 7M8 9l7-7" /> },
  { width: "w-[10px]", caret: true },
  { width: "w-4", icon: <path d="M2 2l12 12M10 2v5" /> },
  { width: "w-3", caret: true },
  { width: "w-4", icon: <path d="M2 13h12M4 12l8-9" /> },
  { width: "w-[17px]", icon: <><path d="M3 3h11v11H3z" stroke="#555" /><path d="M1 1h4v4H1z" fill="#cfe6f5" stroke={blue} /></>, on: true },
  { width: "w-[9px]", caret: true },
  { width: "w-[18px]", icon: <path d="M1 3h8M1 8h8M1 13h8M10 3h5M10 8h5M10 13h5" stroke="#444" strokeWidth="2.200" />, on: true },
  { width: "w-4", icon: checker },
  { width: "w-[17px]", icon: <><path d="M5 5h10v9H5z" fill="#333" stroke="none" /><path d="M1 2h8v3" stroke="#555" /></>, on: true },
  { width: "w-[17px]", icon: <>{person}<circle cx="13" cy="3" r="2.500" stroke={blue} /></>, on: true },
  { width: "w-4", icon: <>{person}<path d="M11 2l4 3M15 1l-3 5" stroke="#444" /></> },
  { width: "w-4", icon: person },
  { width: "w-[28px]", text: "1/1000" },
  { width: "w-[9px]", caret: true },
  { width: "w-4", icon: <><circle cx="8" cy="8" r="4" stroke="#444" strokeWidth="3" /><path d="M8 0v3M8 13v3M0 8h3M13 8h3M2.500 2.500l2 2M11.500 11.500l2 2M13.500 2.500l-2 2M4.500 11.500l-2 2" stroke="#444" strokeWidth="2" /></> },
  { width: "w-[11px]", caret: true },
  { width: "w-[17px]", icon: <path d="M8 1v14M1 8h14" stroke="#444" strokeWidth="1.800" /> },
  { width: "w-[18px]", icon: <path d="M3 2h10v12H3zM5 5h2M9 5h3M5 8h2M9 8h3M5 11h2M9 11h3" stroke="#555" /> },
  { width: "w-[18px]", icon: <><path d="M2 2h11v6M2 2v10h5" stroke="#555" /><path d="M8 9h6v5H8z" fill="#555" /></> },
  { width: "w-[9px]", caret: true },
  { width: "w-[18px]", icon: <><path d="M1 2h5v5H1zM6 9l4 6H2z" /><circle cx="12" cy="6" r="3" /></> },
  { width: "w-[18px]", icon: <><circle cx="8" cy="8" r="6" fill="#c5d3df" stroke="#9db2c4" /><path d="M5 11l6-6" stroke="#fff" /></>, on: true },
  { width: "w-[19px]", icon: <><path d="M3 2h7l3 3v7H3z" fill="#3467a8" stroke="none" /><path d="M7 9l3-3 5 8H8z" fill="#e5c32c" stroke="none" /><path d="M4 3h3v3H4z" fill="#3d9c5a" stroke="none" /></> },
  { width: "w-5", icon: <path d="M1 5h8v5H1zM7 8h8v5H7z" stroke="#e5a084" /> },
  { width: "w-[19px]", icon: <path d="M1 2h14v12H1zM4 8v3h3M9 5h3v3" stroke="#666" /> },
  { width: "w-[15px]", icon: <path d="M1 3h14M1 8h14M1 13h14" stroke="#444" strokeWidth="1.800" /> },
];

const StatusBar = () => (
  <div className="flex h-[18px] items-center justify-end border-b border-[#a8a8a8] bg-[#f5f5f5] pr-[2px]">
    {statusItems.map((item, i) => (
      <button key={i} aria-label={item.text ?? "Status toggle"} className={`flex h-4 ${item.width} shrink-0 items-center justify-center ${item.on ? "border border-[#a9cbe2] bg-[#d4e9f7]" : ""}`}>
        {item.icon && <Ico>{item.icon}</Ico>}
        {item.caret && <Caret />}
        {item.text}
      </button>
    ))}
  </div>
);

const App = () => (
  <div className="relative flex min-h-screen flex-col overflow-hidden bg-[#d9d9d9] font-[Lato,'Open_Sans',sans-serif] text-[8px] leading-[12px] text-[#505050]">
    <TitleBar />
    <nav className="flex h-[15px] items-center gap-[14px] border-b border-[#f0f0f0] pt-px pl-2">
      {menus.map((menu) => <a key={menu} href="#">{menu}</a>)}
      <div className="mr-2 ml-auto flex gap-3">
        <button aria-label="Minimize drawing"><Minus className="size-[10px]" /></button>
        <button aria-label="Restore drawing"><Copy className="size-[10px] -scale-x-100" /></button>
        <button aria-label="Close drawing"><X className="size-[10px]" /></button>
      </div>
    </nav>
    <nav className="flex h-4 items-center gap-3 pt-px pl-[3px]">
      <a href="#" className="-mr-1 flex h-full w-8 items-center justify-center bg-[#f5f5f5]">Home</a>
      {ribbonTabs.map((tab) => <a key={tab} href="#" className={tab === "Collaborate" ? "mx-[2px]" : ""}>{tab}</a>)}
      <button className="ml-3 flex items-center gap-[3px]" aria-label="Ribbon display">
        <Ico className="h-[6px] w-[10px]" box="0 0 10 6"><path d="M.5.500h9v5h-9z" fill="#fff" /><path d="M4 4l1-2 1 2z" fill="#555" stroke="none" /></Ico>
        <Caret className="w-1" />
      </button>
    </nav>
    <Ribbon />
    <DocTabs />
    <div className="flex flex-1">
      <PropertiesPalette />
      <main className="relative flex-1 overflow-hidden bg-white">
        <span className="absolute top-[3px] left-[3px] text-[#222]">[−][Top][2D Wireframe]</span>
        <Drawing />
        <Compass />
        <NavBar />
        <DynamicInput />
        <CommandLine />
      </main>
    </div>
    <LayoutTabs />
    <StatusBar />
    <footer className="flex h-8 flex-col items-end bg-[#eeeeee] pt-[5px] pr-3 leading-[11px] text-[#222]">
      <time>01:28</time>
      <time>19/12/2025</time>
    </footer>
    <p className="absolute bottom-0 left-[416px] flex h-10 w-[468px] items-center justify-center bg-[#4b0005] text-[33px] whitespace-nowrap text-white">
      MANQUEANDO EN AUTOCAD
    </p>
  </div>
);

export default App;
